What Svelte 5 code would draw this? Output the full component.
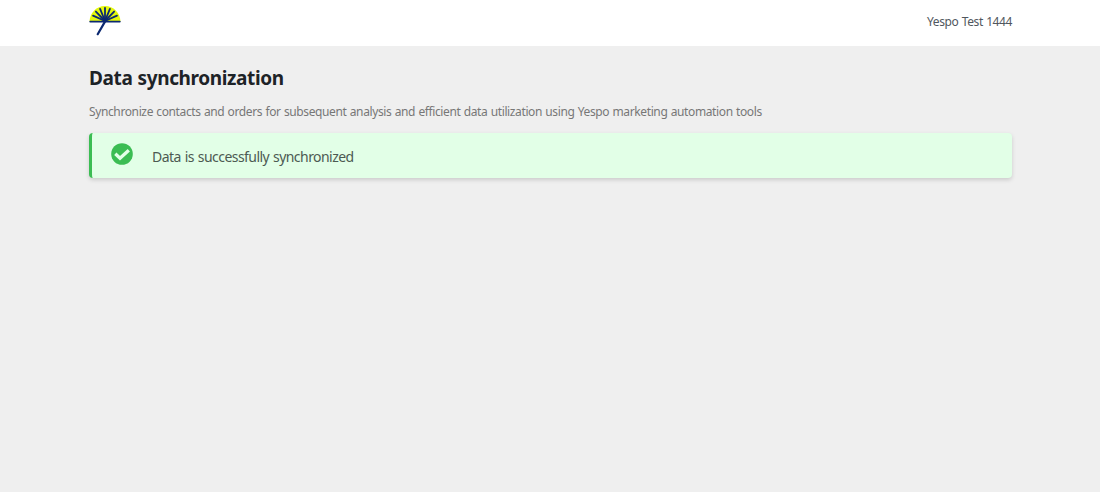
<script>
  const account = 'Yespo Test 1444';
  const rays = [-66, -44, -22, 0, 22, 44, 66];
</script>

<div class="page">
  <header>
    <div class="wrap bar">
      <svg class="logo" width="32" height="32" viewBox="0 0 32 32" aria-label="Yespo">
        <path d="M.5 16.5C1 7.7 7.4 1 16 1S31 7.7 31.5 16.5Z" fill="#e4f80c" />
        <g stroke="#0b2870" stroke-width="1.8" stroke-linecap="round" fill="none">
          {#each rays as angle}
            <path d="M16 16V2.9" transform="rotate({angle} 16 16)" />
          {/each}
          <path d="M1.2 16.6H30.8" />
          <path d="M16 16.6L8.7 29.2" stroke-width="2.2" />
        </g>
      </svg>
      <span class="account">{account}</span>
    </div>
  </header>
  <main class="wrap">
    <h1><span>Data synchronization</span></h1>
    <p class="lead"><span>Synchronize contacts and orders for subsequent analysis and efficient data utilization using Yespo marketing automation tools</span></p>
    <div class="notice">
      <svg width="22" height="22" viewBox="0 0 22 22" aria-hidden="true">
        <circle cx="11" cy="11" r="10.8" fill="#3bbd53" />
        <path d="M4.3 10.8L9 15.2L17.8 7.2" fill="none" stroke="#e2ffe7" stroke-width="3.3" />
      </svg>
      <span class="message">Data is successfully synchronized</span>
    </div>
  </main>
</div>

<style>
  :global(body) {
    background: #efefef;
  }
  .page {
    min-height: 100vh;
    background: #efefef;
    font-family: 'Noto Sans', 'Open Sans', sans-serif;
  }
  .wrap {
    width: 923px;
    margin: 0 auto;
    padding-left: 1px;
  }
  header {
    height: 46px;
    background: #fff;
  }
  .bar {
    display: flex;
    justify-content: space-between;
  }
  .logo {
    margin-top: 5px;
  }
  .account {
    margin-top: 13px;
    font-size: 12px;
    line-height: 18px;
    letter-spacing: -0.4px;
    word-spacing: 0.6px;
    color: #50575e;
    white-space: nowrap;
  }
  h1 {
    margin: 0;
    padding-top: 18px;
    font-size: 19px;
    line-height: 28px;
    letter-spacing: -0.38px;
    word-spacing: 0.6px;
    font-weight: 700;
    color: #1d2327;
    white-space: nowrap;
  }
  .lead {
    margin: 11px 0 0;
    font-size: 12px;
    line-height: 18px;
    letter-spacing: -0.38px;
    word-spacing: 0.55px;
    color: #777;
    white-space: nowrap;
  }
  .notice {
    display: flex;
    align-items: flex-start;
    box-sizing: border-box;
    height: 45px;
    margin-top: 12px;
    padding: 10px 19px;
    border-left: 3px solid #3bbd53;
    border-radius: 4px;
    background: #e2ffe7;
    box-shadow: 0 2px 4px rgba(0, 0, 0, 0.15);
  }
  .message {
    margin: 4px 0 0 19px;
    font-size: 14px;
    line-height: 20px;
    letter-spacing: -0.55px;
    word-spacing: 0.8px;
    color: #4c5a52;
    white-space: nowrap;
  }
</style>
